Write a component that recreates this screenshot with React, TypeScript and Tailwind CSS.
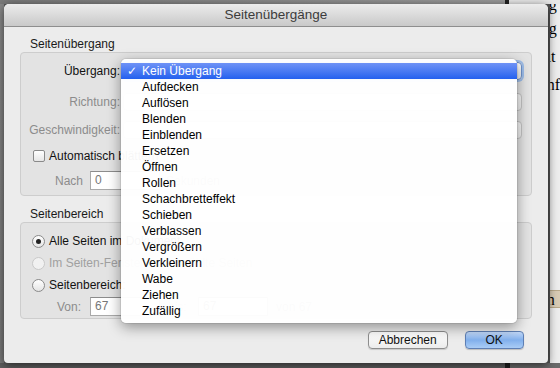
const transitions = [
  "Kein Übergang",
  "Aufdecken",
  "Auflösen",
  "Blenden",
  "Einblenden",
  "Ersetzen",
  "Öffnen",
  "Rollen",
  "Schachbretteffekt",
  "Schieben",
  "Verblassen",
  "Vergrößern",
  "Verkleinern",
  "Wabe",
  "Ziehen",
  "Zufällig",
];

function Popup({ focused, disabled }: { focused?: boolean; disabled?: boolean }) {
  if (focused) {
    return (
      <div className="w-[399px] h-[18px] rounded-[4px] border border-[#6f93cc] bg-gradient-to-b from-[#ffffff] to-[#eeeeee] shadow-[0_0_0_2px_#9dbde9]" />
    );
  }
  return (
    <div
      className={
        disabled
          ? "w-[399px] h-[18px] rounded-[4px] border border-[#c4c4c4] bg-gradient-to-b from-[#f7f7f7] to-[#ededed]"
          : "w-[399px] h-[18px] rounded-[4px] border border-[#9a9a9a] bg-white"
      }
    />
  );
}

function Field({ value, width }: { value: string; width: string }) {
  return (
    <div
      className={`${width} h-[19px] border border-[#a9a9a9] border-t-[#8c8c8c] bg-white pl-[4px] leading-[17px] text-[#777]`}
    >
      {value}
    </div>
  );
}

function Radio({ checked, disabled }: { checked?: boolean; disabled?: boolean }) {
  return (
    <div
      className={
        disabled
          ? "w-[13px] h-[13px] rounded-full border border-[#c9c9c9] bg-[#f1f1f1]"
          : "w-[13px] h-[13px] rounded-full border border-[#8a8a8a] bg-gradient-to-b from-[#ffffff] to-[#e4e4e4] flex items-center justify-center"
      }
    >
      {checked && <div className="w-[5px] h-[5px] rounded-full bg-[#222]" />}
    </div>
  );
}

function TransitionMenu() {
  return (
    <div className="absolute left-[117px] top-[55px] w-[396px] rounded-[5px] bg-white/[0.965] py-[4px] shadow-[0_4px_14px_rgba(0,0,0,0.4),0_0_0_1px_rgba(0,0,0,0.07)]">
      {transitions.map((t, i) =>
        i === 0 ? (
          <div
            key={t}
            className="h-[16px] flex items-center bg-gradient-to-b from-[#6e92f6] to-[#2360ee] text-white leading-[16px]"
          >
            <span className="w-[21px] pl-[6px] font-['DejaVu_Sans',sans-serif] text-[12px] font-bold">✓</span>
            <span>{t}</span>
          </div>
        ) : (
          <div key={t} className="h-[16px] pl-[21px] leading-[16px] text-black">
            {t}
          </div>
        )
      )}
    </div>
  );
}

function Dialog() {
  return (
    <div className="relative z-10 w-[547px] h-[359px] flex flex-col rounded-t-[5px] rounded-b-[4px] bg-[#ececec] shadow-[0_2px_10px_rgba(0,0,0,0.6)]">
      {/* title bar */}
      <div className="h-[23px] flex items-center justify-center rounded-t-[5px] border-b border-[#8e8e8e] bg-gradient-to-b from-[#ececec] to-[#c9c9c9] text-[13.5px] text-[#3c3c3c]">
        Seitenübergänge
      </div>

      <div className="flex-1 flex flex-col px-[16px] pt-[10px]">
        <div className="h-[15px] leading-[15px] pl-[10px] text-[#1a1a1a]">Seitenübergang</div>

        {/* group 1 */}
        <div className="h-[144px] flex flex-col rounded-[4px] border border-[#cdcdcd] bg-[#e3e3e3] pt-[9px]">
          <div className="h-[18px] flex items-center gap-[3px]">
            <div className="w-[99px] text-right text-[#111]">Übergang:</div>
            <Popup focused />
          </div>
          <div className="h-[18px] mt-[13px] flex items-center gap-[3px]">
            <div className="w-[99px] text-right text-[#8c8c8c]">Richtung:</div>
            <Popup disabled />
          </div>
          <div className="h-[18px] mt-[10px] flex items-center gap-[3px]">
            <div className="w-[99px] text-right text-[#8c8c8c]">Geschwindigkeit:</div>
            <Popup disabled />
          </div>
          <div className="h-[16px] mt-[9px] flex items-center gap-[4px] pl-[12px]">
            <div className="w-[12px] h-[12px] rounded-[2px] border border-[#8a8a8a] bg-gradient-to-b from-[#ffffff] to-[#e6e6e6]" />
            <span className="text-[#111]">Automatisch blättern</span>
          </div>
          <div className="h-[19px] mt-[7px] flex items-center pl-[34px]">
            <span className="w-[35px] text-[#8c8c8c]">Nach</span>
            <Field value="0" width="w-[70px]" />
            <span className="ml-[6px] text-[#8c8c8c]">Sekunden</span>
          </div>
        </div>

        <div className="h-[15px] mt-[11px] leading-[15px] pl-[10px] text-[#1a1a1a]">Seitenbereich</div>

        {/* group 2 */}
        <div className="h-[97px] flex flex-col rounded-[4px] border border-[#cdcdcd] bg-[#e3e3e3] pt-[10px]">
          <div className="h-[16px] flex items-center gap-[4px] pl-[11px]">
            <Radio checked />
            <span className="text-[#111]">Alle Seiten im Dokument</span>
          </div>
          <div className="h-[16px] mt-[6px] flex items-center gap-[4px] pl-[11px]">
            <Radio disabled />
            <span className="text-[#a0a0a0]">Im Seiten-Fenster ausgewählte Seiten</span>
          </div>
          <div className="h-[16px] mt-[6px] flex items-center gap-[4px] pl-[11px]">
            <Radio />
            <span className="text-[#111]">Seitenbereich:</span>
          </div>
          <div className="h-[19px] mt-[4px] flex items-center pl-[36px]">
            <span className="w-[33px] text-[#8c8c8c]">Von:</span>
            <Field value="67" width="w-[70px]" />
            <span className="ml-[8px] w-[30px] text-[#8c8c8c]">bis:</span>
            <Field value="67" width="w-[70px]" />
            <span className="ml-[8px] text-[#8c8c8c]">von 67</span>
          </div>
        </div>

        {/* buttons */}
        <div className="h-[18px] mt-[12px] flex justify-end gap-[17px] pr-[8px]">
          <div className="w-[80px] h-[18px] flex items-center justify-center rounded-[4px] border border-[#8e8e8e] bg-gradient-to-b from-[#ffffff] to-[#ececec] shadow-[0_1px_1px_rgba(0,0,0,0.15)] text-[#111]">
            Abbrechen
          </div>
          <div className="w-[59px] h-[18px] flex items-center justify-center rounded-[4px] border border-[#5e7fb4] bg-gradient-to-b from-[#c3dafa] via-[#82b0ec] to-[#a9ccf5] shadow-[0_1px_1px_rgba(0,0,0,0.2)] text-[#111]">
            OK
          </div>
        </div>
      </div>

      <TransitionMenu />
    </div>
  );
}

export default function App() {
  return (
    <div className="w-[560px] h-[368px] overflow-hidden flex flex-col bg-[#5a5a5a] font-['Liberation_Sans',Arial,sans-serif] text-[12px]">
      {/* desktop strip above the sheet */}
      <div className="h-[4px] flex">
        <div className="w-[505px] bg-gradient-to-r from-[#7a7a7a] to-[#9a9a9a]" />
        <div className="w-[4px] bg-[#222]" />
        <div className="flex-1 bg-[#e8e8e8]" />
      </div>

      <div className="h-[359px] flex">
        <div className="w-[4px] bg-gradient-to-b from-[#8a8a8a] to-[#7a7a7a]" />
        <Dialog />
        <div className="flex-1 flex">
          <div className="w-[2px] bg-[#555]" />
          <div className="flex-1 overflow-hidden bg-[#ededed] font-['Liberation_Serif',serif] text-[16px] leading-[18px] text-black">
            <div className="-mt-[8px] -ml-[1px]">g</div>
            <div className="mt-[6px] -ml-[1px]">g</div>
            <div className="mt-[10px] -ml-[3px]">it</div>
            <div className="mt-[10px] -ml-[3px]">nf</div>
            <div className="mt-[196px] h-[18px] -ml-[3px] bg-[#d8cbb4] border-y border-[#b9a98a]">h</div>
          </div>
        </div>
      </div>

      <div className="flex-1 flex">
        <div className="w-[505px] bg-[#5d5d5d]" />
        <div className="w-[5px] bg-[#1f1f1f]" />
        <div className="flex-1 bg-[#6a6a6a]" />
      </div>
    </div>
  );
}
